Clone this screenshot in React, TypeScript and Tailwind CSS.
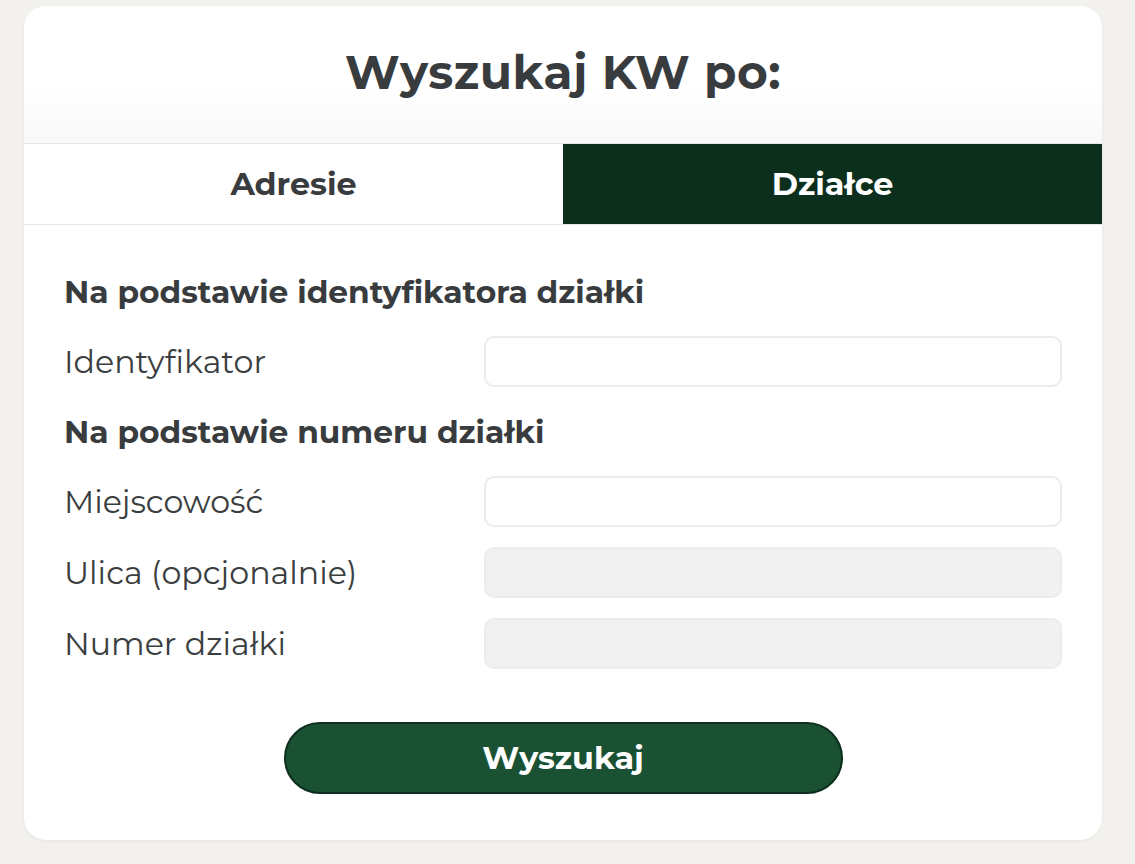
import React, { useState } from "react";

const FONT = { fontFamily: "Montserrat, Inter, 'Noto Sans', sans-serif" };

function FieldRow({ label, disabled }: { label: string; disabled?: boolean }) {
  return (
    <div className="flex items-center h-[51px]">
      <label className="w-[420px] shrink-0 text-[31.7px] text-[#3b3e40]">{label}</label>
      <input
        disabled={disabled}
        className={
          "flex-1 h-[51px] rounded-[10px] border-2 outline-none px-4 text-[24px] " +
          (disabled ? "bg-[#f1f1f1] border-[#ececec]" : "bg-white border-[#ececec]")
        }
      />
    </div>
  );
}

export default function App() {
  const [tab, setTab] = useState<"adres" | "dzialka">("dzialka");

  return (
    <div className="min-h-screen bg-[#f2f1ed] pt-[6px] pl-[24px] pr-[33px] pb-[24px]" style={FONT}>
      <div className="w-[1078px] bg-white rounded-[22px] overflow-hidden shadow-[0_1px_3px_rgba(0,0,0,0.06)]">
        {/* Header */}
        <div className="h-[137px] flex items-center justify-center bg-gradient-to-b from-white from-60% to-[#f8f8f8]">
          <h1 className="text-[47px] font-bold text-[#393c3e] tracking-[0.5px] mt-[-3px]">Wyszukaj KW po:</h1>
        </div>

        {/* Tabs */}
        <div className="grid grid-cols-2 h-[82px] border-t border-b border-[#e6e6e6]">
          <button
            onClick={() => setTab("adres")}
            className={
              "flex items-center justify-center text-[31.8px] font-bold " +
              (tab === "adres" ? "bg-[#0c2e1c] text-white" : "bg-white text-[#393c3e]")
            }
          >
            Adresie
          </button>
          <button
            onClick={() => setTab("dzialka")}
            className={
              "flex items-center justify-center text-[31.8px] font-bold " +
              (tab === "dzialka" ? "bg-[#0c2e1c] text-white" : "bg-white text-[#393c3e]")
            }
          >
            Działce
          </button>
        </div>

        {/* Form */}
        <div className="px-[40px] pt-[49px] pb-[46px]">
          <h2 className="text-[31.3px] font-bold text-[#393c3e] leading-[36px]">Na podstawie identyfikatora działki</h2>
          <div className="mt-[26px]">
            <FieldRow label="Identyfikator" />
          </div>

          <h2 className="mt-[27px] text-[31.3px] font-bold text-[#393c3e] leading-[36px]">Na podstawie numeru działki</h2>
          <div className="mt-[26px] flex flex-col gap-[20px]">
            <FieldRow label="Miejscowość" />
            <FieldRow label="Ulica (opcjonalnie)" disabled />
            <FieldRow label="Numer działki" disabled />
          </div>

          <div className="mt-[53px] flex justify-center">
            <button className="w-[559px] h-[72px] rounded-full bg-[#1a5133] border-2 border-[#0c2e1c] text-white text-[31.8px] font-bold">
              Wyszukaj
            </button>
          </div>
        </div>
      </div>
    </div>
  );
}
